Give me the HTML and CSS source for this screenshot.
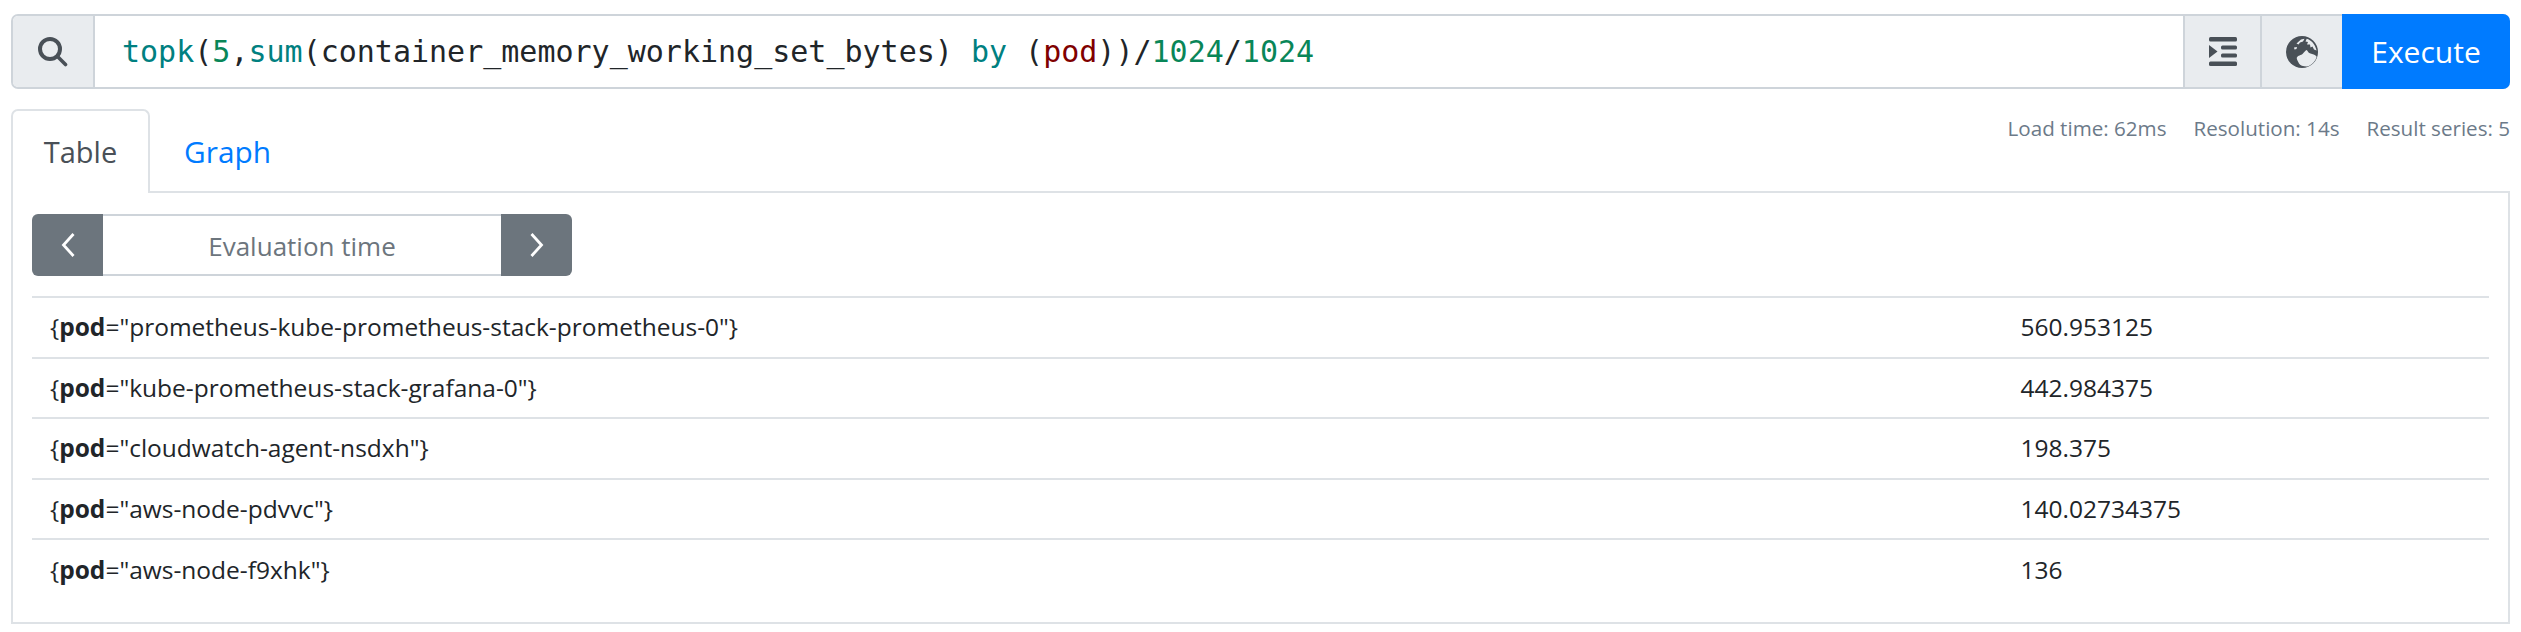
FILE: index.html
```html
<!DOCTYPE html>
<html lang="en">
<head>
  <meta charset="UTF-8">
  <title>Prometheus</title>
  <link rel="stylesheet" href="styles.css">
</head>
<body>
  <div class="query-bar">
    <div class="addon search-addon">
      <svg class="icon" viewBox="0 0 30 30" width="30" height="30"><circle cx="12" cy="12" r="10" fill="none" stroke="#495057" stroke-width="4"/><path d="M19.5 19.5L27.5 27.5" stroke="#495057" stroke-width="3.6" stroke-linecap="round"/></svg>
    </div>
    <div class="expr"><span class="fn">topk</span>(<span class="num">5</span>,<span class="fn">sum</span>(container_memory_working_set_bytes) <span class="fn">by</span> (<span class="lbl">pod</span>))/<span class="num">1024</span>/<span class="num">1024</span></div>
    <div class="addon fmt-addon">
      <svg class="icon" viewBox="0 0 28 29" width="28" height="29"><rect x="0" y="0" width="28" height="4.4" rx="1.5" fill="#495057"/><rect x="12" y="8.6" width="16" height="4" rx="1.5" fill="#495057"/><rect x="12" y="16.6" width="16" height="4" rx="1.5" fill="#495057"/><rect x="0" y="24.6" width="28" height="4.4" rx="1.5" fill="#495057"/><path d="M0 8L8.5 14.5L0 21Z" fill="#495057"/></svg>
    </div>
    <div class="addon globe-addon">
      <svg class="icon" viewBox="0 0 32 32" width="32" height="32"><circle cx="16" cy="16" r="16" fill="#495057"/><path d="M10.7 22C12 19 15 19.5 17 17.5C18 16 19.5 14.5 20.7 14C22 15.5 22.5 17 24.5 17.5C26.5 18 29 18.5 30.7 20.7C29.5 25 26 29 21 30.5C17 30.5 14 29.5 13 27.5C12 25.5 11 24 10.7 22Z" fill="#e9ecef"/><path d="M20.7 2.8C25 4 29 8 30.6 14.5L28 13.5L26.5 10.5L24.5 11.5L24 8.5L21 8.5L22 6L19.5 5.5Z" fill="#e9ecef"/><path d="M10.5 7.5L15 3.5L18.5 2.8L17 5.5L14 6.5L12.5 8.5Z" fill="#e9ecef"/><path d="M8 11.5L11 11L10.5 13L8.5 13.5Z" fill="#e9ecef"/></svg>
    </div>
    <button class="execute">Execute</button>
  </div>

  <div class="tabs-row">
    <ul class="tabs">
      <li class="tab active">Table</li>
      <li class="tab link">Graph</li>
    </ul>
    <div class="stats">
      <span>Load time: 62ms</span>
      <span>Resolution: 14s</span>
      <span>Result series: 5</span>
    </div>
  </div>

  <div class="panel">
    <div class="eval-time">
      <button class="step"><svg viewBox="0 0 16 26" width="16" height="26"><path d="M13.5 2L3.5 13L13.5 24" fill="none" stroke="#fff" stroke-width="2.8"/></svg></button>
      <div class="eval-input">Evaluation time</div>
      <button class="step"><svg viewBox="0 0 16 26" width="16" height="26"><path d="M2.5 2L12.5 13L2.5 24" fill="none" stroke="#fff" stroke-width="2.8"/></svg></button>
    </div>
    <table class="results">
      <tbody>
        <tr><td class="series">{<b>pod</b>="prometheus-kube-prometheus-stack-prometheus-0"}</td><td>560.953125</td></tr>
        <tr><td class="series">{<b>pod</b>="kube-prometheus-stack-grafana-0"}</td><td>442.984375</td></tr>
        <tr><td class="series">{<b>pod</b>="cloudwatch-agent-nsdxh"}</td><td>198.375</td></tr>
        <tr><td class="series">{<b>pod</b>="aws-node-pdvvc"}</td><td>140.02734375</td></tr>
        <tr><td class="series">{<b>pod</b>="aws-node-f9xhk"}</td><td>136</td></tr>
      </tbody>
    </table>
  </div>
</body>
</html>
```
FILE: styles.css
```css
* { box-sizing: border-box; }
body { margin: 0; padding: 14px 11px 0; background: #fff; color: #212529; font-family: "Open Sans", "Noto Sans", sans-serif; font-size: 24.5px; line-height: 34px; }
.query-bar { display: flex; height: 75px; border: 2px solid #ced4da; border-radius: 7px; }
.addon { display: flex; align-items: center; justify-content: center; background: #e9ecef; }
.search-addon { width: 82px; border-right: 2px solid #ced4da; border-radius: 5px 0 0 5px; }
.fmt-addon { width: 77px; border-left: 2px solid #ced4da; }
.globe-addon { width: 82px; border-left: 2px solid #ced4da; }
.expr { flex: 1; padding-left: 27px; line-height: 71px; font-family: "DejaVu Sans Mono", monospace; font-size: 30px; white-space: pre; }
.fn { color: #008080; }
.num { color: #098658; }
.lbl { color: #800000; }
.execute { width: 168px; margin: -2px -2px -2px 0; border: none; border-radius: 0 7px 7px 0; background: #007bff; color: #fff; font: inherit; font-size: 30px; }
.tabs-row { display: flex; justify-content: space-between; margin-top: 20px; }
.tabs { display: flex; margin: 0; padding: 0; list-style: none; }
.tab { width: 139px; height: 84px; padding-top: 24px; text-align: center; font-size: 29px; }
.tab.active { position: relative; z-index: 1; background: #fff; color: #495057; border: 2px solid #dee2e6; border-bottom: none; border-radius: 7px 7px 0 0; }
.tab.link { color: #007bff; width: 155px; padding-top: 26px; font-size: 29.8px; }
.stats { display: flex; gap: 27px; padding-top: 4px; font-size: 20.6px; color: #6c7a89; line-height: 30px; }
.panel { margin-top: -2px; height: 433px; border: 2px solid #dee2e6; padding: 21px 19px 0; }
.eval-time { display: flex; height: 62px; width: 540px; }
.step { width: 71px; border: none; background: #6c757d; display: flex; align-items: center; justify-content: center; }
.step:first-child { border-radius: 6px 0 0 6px; }
.step:last-child { border-radius: 0 6px 6px 0; }
.eval-input { flex: 1; border: 2px solid #ced4da; border-width: 2px 0; text-align: center; line-height: 60px; color: #6c757d; font-size: 26px; }
.results { width: 100%; margin-top: 20px; border-collapse: collapse; table-layout: fixed; }
.results td { padding: 12px 18px; border-top: 2px solid #dee2e6; height: 60.5px; }
.results .series { width: 80.2%; }
b { font-weight: 700; }
```
